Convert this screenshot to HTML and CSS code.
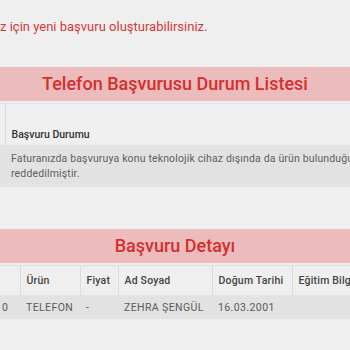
FILE: index.html
```html
<!DOCTYPE html>
<html lang="tr">
<head>
<meta charset="utf-8">
<link rel="stylesheet" href="styles.css">
</head>
<body>
<div class="page">
  <p class="notice">z için yeni başvuru oluşturabilirsiniz.</p>
  <h2 class="band band-first">Telefon Başvurusu Durum Listesi</h2>
  <table class="status">
    <thead>
      <tr><th class="edge"></th><th>Başvuru Durumu</th></tr>
    </thead>
    <tbody>
      <tr><td class="edge"></td><td>Faturanızda başvuruya konu teknolojik cihaz dışında da ürün bulunduğu için başvurunuz<br>reddedilmiştir.</td></tr>
    </tbody>
  </table>
  <h2 class="band band-second">Başvuru Detayı</h2>
  <table class="detail">
    <thead>
      <tr>
        <th class="c0"></th>
        <th class="c1">Ürün</th>
        <th class="c2">Fiyat</th>
        <th class="c3">Ad Soyad</th>
        <th class="c4">Doğum Tarihi</th>
        <th class="c5">Eğitim Bilgisi</th>
      </tr>
    </thead>
    <tbody>
      <tr>
        <td class="c0 num">0</td>
        <td class="c1">TELEFON</td>
        <td class="c2">-</td>
        <td class="c3">ZEHRA ŞENGÜL</td>
        <td class="c4">16.03.2001</td>
        <td class="c5"></td>
      </tr>
    </tbody>
  </table>
</div>
</body>
</html>
```

FILE: styles.css
```css
html, body {
  margin: 0;
  padding: 0;
  background: #efefef;
  overflow: hidden;
}
.page {
  width: 350px;
  height: 350px;
  overflow: hidden;
  font-family: Roboto, "Liberation Sans", sans-serif;
}
.notice {
  margin: 0;
  padding-top: 19px;
  font-size: 13px;
  line-height: 16px;
  color: #d2393b;
  white-space: nowrap;
}
.band {
  margin: 0;
  background: #ecbcbc;
  color: #d42f2f;
  font-weight: 500;
  font-size: 18px;
  text-align: center;
  height: 34px;
  line-height: 34px;
  white-space: nowrap;
}
.band-first {
  margin-top: 32px;
}
.band-second {
  margin-top: 42px;
}
table {
  border-collapse: collapse;
  width: 500px;
  table-layout: fixed;
  font-size: 10.5px;
  color: #5a5a5a;
  white-space: nowrap;
}
.status {
  margin-top: 2px;
  border-top: 1px solid #e2e2e2;
}
.status th {
  text-align: left;
  font-weight: 500;
  color: #333;
  height: 41px;
  padding: 20px 7px 0 6px;
  box-sizing: border-box;
  border-left: 1px solid #dcdcdc;
  vertical-align: middle;
}
.status .edge {
  width: 5px;
  padding: 0;
  border-left: none;
}
.status td {
  background: #e2e2e2;
  line-height: 15px;
  padding: 6px 7px 6px 6px;
  color: #5f5f5f;
  letter-spacing: 0.15px;
}
.status td.edge { padding: 0; }
.detail {
  margin-top: 2px;
  border-top: 1px solid #e0e0e0;
}
.detail th {
  text-align: left;
  font-weight: 500;
  color: #444;
  height: 30px;
  padding: 0 6px;
  box-sizing: border-box;
  border-left: 1px solid #dcdcdc;
  letter-spacing: 0.2px;
}
.detail th.c0 { border-left: none; }
.detail td {
  background: #e2e2e2;
  height: 24px;
  padding: 0 6px;
  box-sizing: border-box;
  color: #5a5a5a;
  letter-spacing: 0.4px;
}
.detail td.num { padding-left: 2px; }
.c0 { width: 20px; }
.c1 { width: 60px; }
.c2 { width: 38px; }
.c3 { width: 94px; }
.c4 { width: 80px; }
.c5 { width: 208px; }
```
